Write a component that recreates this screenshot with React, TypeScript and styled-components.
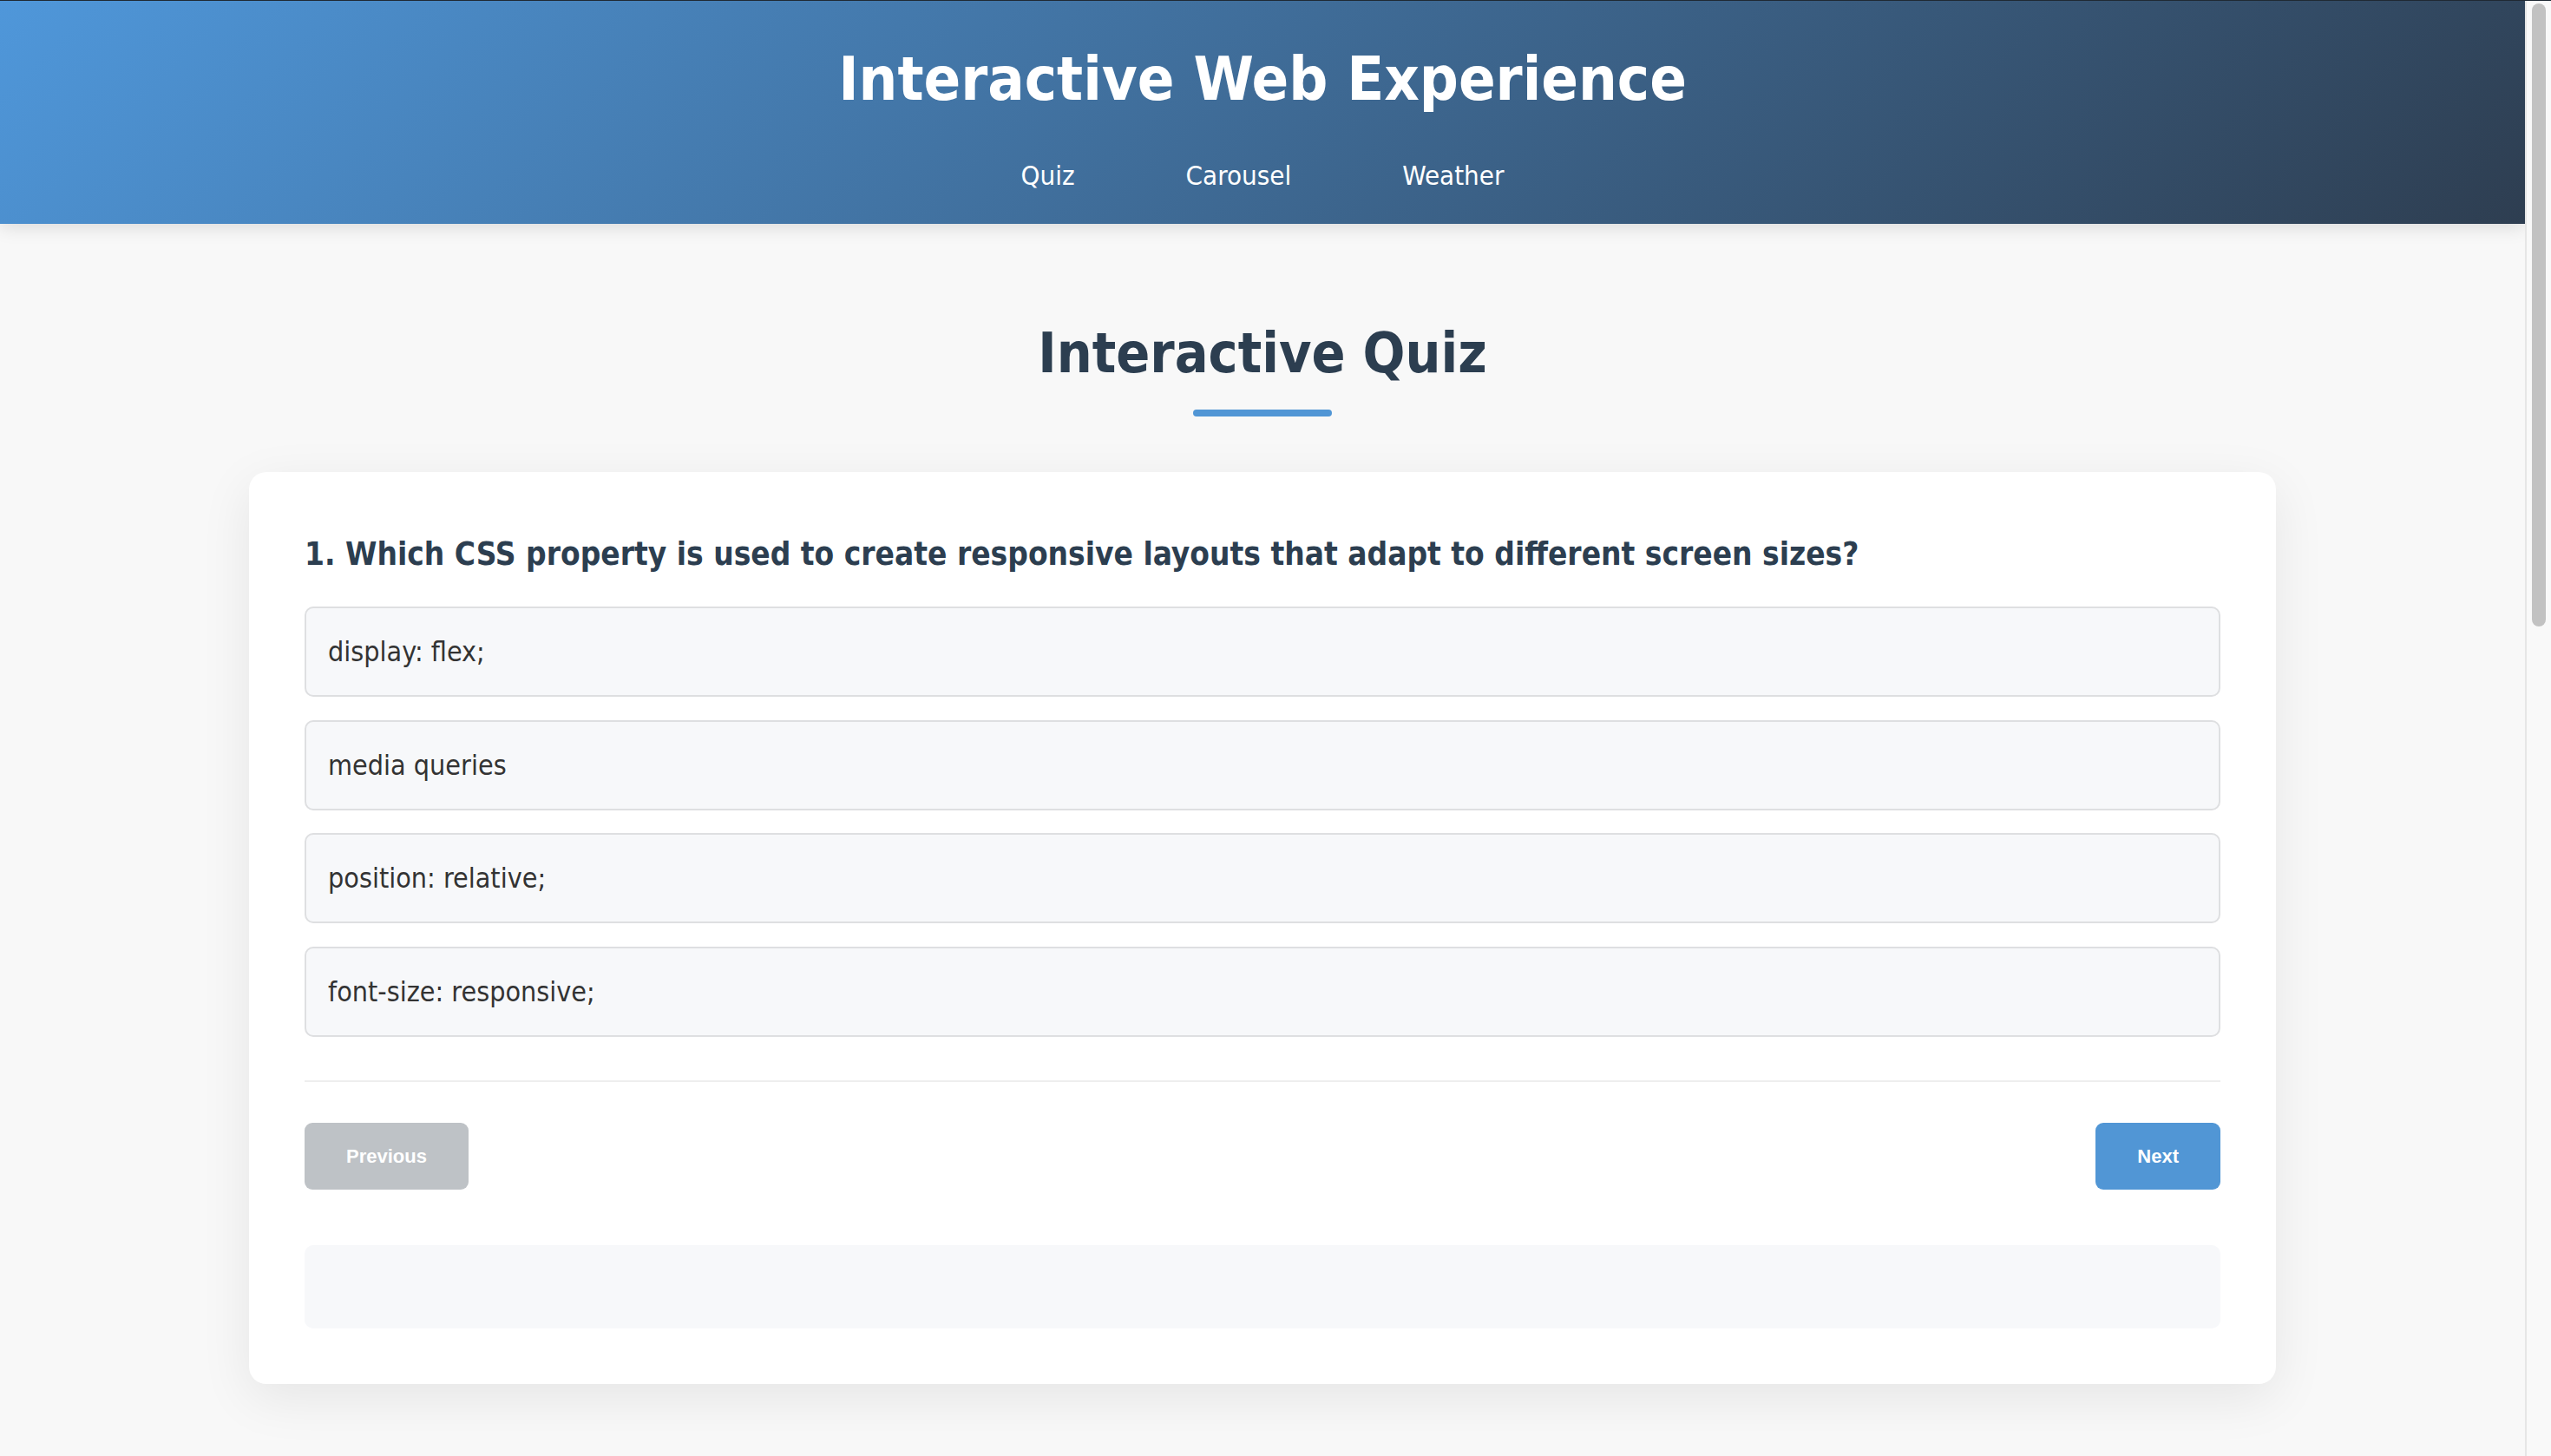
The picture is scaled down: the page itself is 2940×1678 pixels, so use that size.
import React, { useState } from "react";
import styled, { createGlobalStyle } from "styled-components";

const GlobalStyle = createGlobalStyle`
  html, body {
    margin: 0;
    padding: 0;
    height: 100%;
    overflow: hidden;
  }
  body {
    background: #f8f8f8;
    font-family: "DejaVu Sans Condensed", "DejaVu Sans", Verdana, sans-serif;
    font-stretch: semi-condensed;
    color: #333;
  }
  * { box-sizing: border-box; }
`;

const Shell = styled.div`
  display: flex;
  height: 100vh;
  border-top: 1px solid #1f2933;
`;

const Page = styled.div`
  flex: 1;
  min-width: 0;
  overflow: hidden;
  background: #f8f8f8;
`;

const ScrollRail = styled.div`
  width: 30px;
  flex-shrink: 0;
  background: #f9f9f9;
  border-left: 2px solid #e6e6e6;
  padding: 3px 6px 0;
`;

const ScrollThumb = styled.div`
  height: 718px;
  border-radius: 8px;
  background: #c2c2c2;
`;

const Header = styled.header`
  background: linear-gradient(135deg, #4f97da 0%, #2e3e51 100%);
  box-shadow: 0 4px 20px rgba(0, 0, 0, 0.12);
  padding: 47px 0 37px;
  display: flex;
  flex-direction: column;
  align-items: center;
  gap: 50px;
  color: #fff;
`;

const SiteTitle = styled.h1`
  margin: 0;
  font-size: 70px;
  line-height: 86px;
  font-weight: 700;
`;

const Nav = styled.nav`
  display: flex;
  gap: 128px;
`;

const NavLink = styled.a`
  color: #fff;
  text-decoration: none;
  font-size: 31px;
  line-height: 37px;
  cursor: pointer;
`;

const Main = styled.main`
  max-width: 2400px;
  margin: 0 auto;
  padding: 0 32px;
`;

const Section = styled.section`
  padding-top: 111px;
  padding-bottom: 64px;
`;

const SectionTitle = styled.h2`
  margin: 0;
  text-align: center;
  font-size: 64px;
  line-height: 77px;
  font-weight: 700;
  color: #2c3e50;
`;

const TitleBar = styled.div`
  width: 160px;
  height: 8px;
  margin: 26px auto 64px;
  border-radius: 4px;
  background: #5196d5;
`;

const Card = styled.div`
  background: #fff;
  border-radius: 20px;
  padding: 64px;
  box-shadow: 0 16px 60px rgba(0, 0, 0, 0.08);
`;

const Question = styled.h3`
  margin: 0 0 29px;
  font-size: 36.7px;
  line-height: 62px;
  font-weight: 700;
  color: #2c3e50;
`;

const Options = styled.div`
  display: flex;
  flex-direction: column;
  gap: 26.5px;
`;

const Option = styled.button<{ $selected?: boolean }>`
  display: block;
  width: 100%;
  text-align: left;
  font-family: inherit;
  font-stretch: inherit;
  font-size: 32px;
  line-height: 38px;
  color: #333;
  background: ${(p) => (p.$selected ? "#e8f1fb" : "#f7f8fa")};
  border: 2px solid ${(p) => (p.$selected ? "#5196d5" : "#dedfe1")};
  border-radius: 10px;
  padding: 31px 25px;
  cursor: pointer;
`;

const Controls = styled.div`
  margin-top: 50px;
  border-top: 2px solid #eeeeee;
  padding-top: 47px;
  display: flex;
  justify-content: space-between;
  align-items: center;
`;

const NavButton = styled.button<{ $variant: "primary" | "muted" }>`
  font-family: "Liberation Sans", Arial, sans-serif;
  font-size: 22px;
  font-weight: 700;
  line-height: 29px;
  color: #fff;
  border: none;
  border-radius: 9px;
  padding: 24px 48px;
  background: ${(p) => (p.$variant === "primary" ? "#5196d5" : "#bec2c6")};
  cursor: ${(p) => (p.$variant === "primary" ? "pointer" : "default")};
`;

const Result = styled.div`
  margin-top: 64px;
  min-height: 96px;
  padding: 48px;
  border-radius: 10px;
  background: #f7f8fa;
`;

const questions = [
  {
    q: "Which CSS property is used to create responsive layouts that adapt to different screen sizes?",
    options: ["display: flex;", "media queries", "position: relative;", "font-size: responsive;"],
  },
];

export default function App() {
  const [selected, setSelected] = useState<number | null>(null);
  const current = questions[0];

  return (
    <>
      <GlobalStyle />
      <Shell>
        <Page>
          <Header>
            <SiteTitle>Interactive Web Experience</SiteTitle>
            <Nav>
              <NavLink href="#quiz">Quiz</NavLink>
              <NavLink href="#carousel">Carousel</NavLink>
              <NavLink href="#weather">Weather</NavLink>
            </Nav>
          </Header>
          <Main>
            <Section id="quiz">
              <SectionTitle>Interactive Quiz</SectionTitle>
              <TitleBar />
              <Card>
                <Question>1. {current.q}</Question>
                <Options>
                  {current.options.map((o, i) => (
                    <Option key={o} $selected={selected === i} onClick={() => setSelected(i)}>
                      {o}
                    </Option>
                  ))}
                </Options>
                <Controls>
                  <NavButton $variant="muted" disabled>
                    Previous
                  </NavButton>
                  <NavButton $variant="primary">Next</NavButton>
                </Controls>
                <Result />
              </Card>
            </Section>
          </Main>
        </Page>
        <ScrollRail aria-hidden="true">
          <ScrollThumb />
        </ScrollRail>
      </Shell>
    </>
  );
}
